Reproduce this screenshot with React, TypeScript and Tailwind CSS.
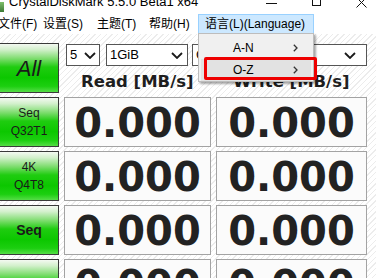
import React from 'react';

const ui = { fontFamily: '"Liberation Sans", "Noto Sans CJK SC", sans-serif' };
const num = { fontFamily: '"DejaVu Sans", sans-serif' };

function Chevron() {
  return (
    <svg width="12" height="7" viewBox="0 0 12 7" fill="none">
      <path d="M1 1 L6 6 L11 1" stroke="#1a1a1a" strokeWidth="1.8" />
    </svg>
  );
}

function Arrow() {
  return (
    <svg width="5" height="8" viewBox="0 0 5 8" fill="none">
      <path d="M0.8 0.8 L4 4 L0.8 7.2" stroke="#333" strokeWidth="1.3" />
    </svg>
  );
}

function TestButton({ children, className }: { children: React.ReactNode; className?: string }) {
  return (
    <div
      className={`h-[50px] w-[60px] ml-[-1px] border border-[#3a3a3a] flex flex-col items-center justify-center text-[#1a1a1a] bg-[linear-gradient(to_bottom,#f4f9f2_0%,#d2f0cb_12%,#7fdd70_30%,#1fcc10_48%,#0cc700_70%,#1ccf10_88%,#55dd47_100%)] ${className ?? ''}`}
    >
      {children}
    </div>
  );
}

function ValueBox() {
  return (
    <div className="h-[50px] border border-[#a3a3a3] bg-[#fbfbfb] flex items-center justify-center">
      <span className="text-[40px] font-bold leading-none text-[#222] mt-[1px]" style={num}>
        0.000
      </span>
    </div>
  );
}

export default function App() {
  const menu = [
    { label: '文件(F)', w: 'w-[45px] ml-[-9px]' },
    { label: '设置(S)', w: 'w-[54px]' },
    { label: '主题(T)', w: 'w-[52px]' },
    { label: '帮助(H)', w: 'w-[56px]' },
  ];

  return (
    <div className="relative w-[376px] h-[278px] overflow-hidden bg-white" style={ui}>
      {/* title bar, cut at top */}
      <div className="relative h-[14px] overflow-hidden flex">
        <div className="mt-[2px] w-[4px] h-[10px] bg-[linear-gradient(to_bottom,#7fbf6a,#3d7a35)]" />
        <span className="mt-[-7px] ml-[5px] text-[13px] leading-[18px] text-black whitespace-nowrap">
          CrystalDiskMark 5.5.0 Beta1 x64
        </span>
        <svg className="absolute left-[266px] top-[3px]" width="11" height="1" viewBox="0 0 11 1">
          <rect width="11" height="1" fill="#111" />
        </svg>
        <svg className="absolute left-[312px] top-[-4px]" width="9" height="11" viewBox="0 0 9 11" fill="none">
          <rect x="0.5" y="0.5" width="8" height="9" stroke="#111" />
        </svg>
        <svg className="absolute left-[356px] top-[-3px]" width="11" height="11" viewBox="0 0 11 11" fill="none">
          <path d="M0.5 0.5 L10.5 10.5 M10.5 0.5 L0.5 10.5" stroke="#111" strokeWidth="1" />
        </svg>
      </div>

      {/* menu bar */}
      <div className="h-[20px] flex items-stretch text-[12px] text-black bg-white whitespace-nowrap">
        {menu.map(m => (
          <div key={m.label} className={`${m.w} shrink-0 pl-[7px] flex items-center`}>
            {m.label}
          </div>
        ))}
        <div className="w-[116px] shrink-0 pl-[6px] flex items-center bg-[#cce8ff] border border-[#99d1ff]">
          语言(L)(Language)
        </div>
      </div>

      {/* main area */}
      <div className="h-[244px] pt-[9px] bg-[repeating-linear-gradient(135deg,#ffffff_0px,#ffffff_3px,#ececec_3px,#ececec_4px)]">
        <div className="grid grid-cols-[60px_151px_156px] grid-rows-[50px_50px_50px_50px_50px] gap-y-[4px]">
          <TestButton>
            <span className="text-[22px] italic">All</span>
          </TestButton>
          <div className="col-span-2 ml-[4px] flex flex-col">
            <div className="flex h-[22px] mt-[1px] text-[13px] text-black">
              <div className="ml-[2px] w-[34px] border border-[#555] bg-white flex items-center justify-between pl-[3px] pr-[3px]">
                <span>5</span>
                <Chevron />
              </div>
              <div className="ml-[6px] w-[82px] border border-[#555] bg-white flex items-center justify-between pl-[3px] pr-[4px]">
                <span>1GiB</span>
                <Chevron />
              </div>
              <div className="ml-[4px] flex-1 border border-[#555] bg-white flex items-center justify-between pl-[3px] pr-[10px]">
                <span>C: 24% (28/118GiB)</span>
                <Chevron />
              </div>
            </div>
            <div className="flex mt-[6px] text-[16.5px] font-bold text-[#1e1e1e] leading-[20px]" style={num}>
              <div className="w-[151px] text-center">Read [MB/s]</div>
              <div className="w-[156px] ml-[5px] text-center">Write [MB/s]</div>
            </div>
          </div>

          {[0, 1, 2, 3].map(i => (
            <React.Fragment key={i}>
              {i === 0 && (
                <TestButton className="text-[12px] leading-[18px]">
                  <span>Seq</span>
                  <span>Q32T1</span>
                </TestButton>
              )}
              {i === 1 && (
                <TestButton className="text-[12px] leading-[18px]">
                  <span>4K</span>
                  <span>Q4T8</span>
                </TestButton>
              )}
              {i === 2 && (
                <TestButton>
                  <span className="text-[14px] font-bold">Seq</span>
                </TestButton>
              )}
              {i === 3 && (
                <TestButton>
                  <span className="text-[14px] font-bold">4K</span>
                </TestButton>
              )}
              <div className="ml-[4px]">
                <ValueBox />
              </div>
              <div className="ml-[5px]">
                <ValueBox />
              </div>
            </React.Fragment>
          ))}
        </div>
      </div>

      {/* open language menu */}
      <div className="absolute left-[198px] top-[33px] w-[116px] h-[49px] bg-[#f0f0f0] border border-[#bdbdbd] shadow-[2px_2px_2px_rgba(0,0,0,0.35)] flex flex-col pt-[3px] text-[12px] text-black">
        <div className="h-[22px] flex items-center justify-between pl-[34px] pr-[15px]">
          <span>A-N</span>
          <Arrow />
        </div>
        <div className="h-[22px] mx-[2px] flex items-center justify-between pl-[32px] pr-[13px] bg-[#e2e2e2]">
          <span>O-Z</span>
          <Arrow />
        </div>
      </div>

      {/* red highlight annotation */}
      <div className="absolute left-[204px] top-[57px] w-[113px] h-[23px] border-[3px] border-[#ee0000] rounded-[2px]" />
    </div>
  );
}
